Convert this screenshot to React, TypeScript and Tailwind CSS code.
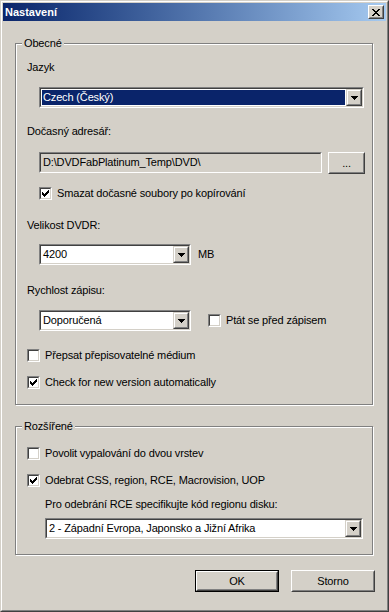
import type { ReactNode } from "react";

const CHECK = [
  "......#",
  ".....##",
  "#...###",
  "##.###.",
  "#####..",
  ".###...",
  "..#....",
];

const CLOSE_X = [
  "##....##",
  ".##..##.",
  "..####..",
  "...##...",
  "..####..",
  ".##..##.",
  "##....##",
];

function Pixels({ rows, color = "#000" }: { rows: string[]; color?: string }) {
  return (
    <svg width={rows[0].length} height={rows.length} shapeRendering="crispEdges" className="block">
      {rows.flatMap((row, y) =>
        row.split("").map((c, x) =>
          c === "#" ? <rect key={`${x}-${y}`} x={x} y={y} width={1} height={1} fill={color} /> : null
        )
      )}
    </svg>
  );
}

function Arrow() {
  return (
    <svg width="7" height="4" shapeRendering="crispEdges" className="block">
      <rect x="0" y="0" width="7" height="1" fill="#000" />
      <rect x="1" y="1" width="5" height="1" fill="#000" />
      <rect x="2" y="2" width="3" height="1" fill="#000" />
      <rect x="3" y="3" width="1" height="1" fill="#000" />
    </svg>
  );
}

// sunken 2px field border (edit / combo box)
function Sunken({ className, inner, children }: { className: string; inner: string; children?: ReactNode }) {
  return (
    <div className={`border border-t-[#808080] border-l-[#808080] border-r-white border-b-white ${className}`}>
      <div className={`h-full border border-t-[#404040] border-l-[#404040] border-r-[#d4d0c8] border-b-[#d4d0c8] ${inner}`}>
        {children}
      </div>
    </div>
  );
}

function Combo({ width, value, selected }: { width: string; value: string; selected?: boolean }) {
  return (
    <Sunken className={`${width} h-[21px]`} inner="flex bg-white">
      <div className="flex-1 min-w-0 p-px">
        <div
          className={`h-full flex items-center pl-[1px] whitespace-nowrap overflow-hidden ${
            selected ? "bg-[#0a246a] text-white" : "text-black"
          }`}
        >
          {value}
        </div>
      </div>
      <div className="w-[16px] h-full border border-t-[#d4d0c8] border-l-[#d4d0c8] border-r-[#404040] border-b-[#404040] bg-[#d4d0c8]">
        <div className="h-full border border-t-white border-l-white border-r-[#808080] border-b-[#808080] flex items-center justify-center">
          <Arrow />
        </div>
      </div>
    </Sunken>
  );
}

function Checkbox({ checked, label }: { checked?: boolean; label: string }) {
  return (
    <div className="flex items-center gap-[5px] h-[13px]">
      <Sunken className="w-[13px] h-[13px] shrink-0" inner="bg-white">
        {checked && (
          <div className="pl-px pt-px">
            <Pixels rows={CHECK} />
          </div>
        )}
      </Sunken>
      <span className="whitespace-nowrap">{label}</span>
    </div>
  );
}

function Button({ children, width, def }: { children: ReactNode; width: string; def?: boolean }) {
  if (def) {
    return (
      <div className={`${width} h-[22px] border border-black`}>
        <div className="h-full border border-t-white border-l-white border-r-[#404040] border-b-[#404040]">
          <div className="h-full border border-t-[#d4d0c8] border-l-[#d4d0c8] border-r-[#808080] border-b-[#808080] flex items-center justify-center">
            {children}
          </div>
        </div>
      </div>
    );
  }
  return (
    <div className={`${width} h-[22px] border border-t-white border-l-white border-r-[#404040] border-b-[#404040]`}>
      <div className="h-full border border-t-[#d4d0c8] border-l-[#d4d0c8] border-r-[#808080] border-b-[#808080] flex items-center justify-center">
        {children}
      </div>
    </div>
  );
}

function Group({ title, className, children }: { title: string; className: string; children: ReactNode }) {
  return (
    <div
      className={`relative ml-[12px] w-[358px] border border-[#808080] shadow-[inset_1px_1px_0_#fff,1px_1px_0_#fff] pl-[11px] ${className}`}
    >
      <span className="absolute -top-[7px] left-[6px] px-[2px] bg-[#d4d0c8]">{title}</span>
      {children}
    </div>
  );
}

export default function App() {
  return (
    <div className="w-[389px] h-[612px] border border-t-[#d4d0c8] border-l-[#d4d0c8] border-r-[#404040] border-b-[#404040] bg-[#d4d0c8] font-['Liberation_Sans',Arial,sans-serif] text-[11px] leading-[13px] tracking-[-0.15px] text-black">
      <div className="h-full border border-t-white border-l-white border-r-[#808080] border-b-[#808080] p-px flex flex-col">
        {/* title bar */}
        <div className="h-[18px] flex items-center bg-linear-to-r from-[#0a246a] to-[#a6caf0] pl-[2px] pr-[2px]">
          <span className="font-bold text-white tracking-normal">Nastavení</span>
          <div className="ml-auto w-[16px] h-[14px] border border-t-white border-l-white border-r-[#404040] border-b-[#404040] bg-[#d4d0c8]">
            <div className="h-full border border-t-[#d4d0c8] border-l-[#d4d0c8] border-r-[#808080] border-b-[#808080] flex items-center justify-center">
              <Pixels rows={CLOSE_X} />
            </div>
          </div>
        </div>

        <Group title="Obecné" className="mt-[22px] h-[362px]">
          <div className="mt-[17px]">Jazyk</div>
          <div className="mt-[13px] ml-[12px]">
            <Combo width="w-[325px]" value="Czech (Český)" selected />
          </div>

          <div className="mt-[17px]">Dočasný adresář:</div>
          <div className="mt-[14px] ml-[12px] flex gap-[6px]">
            <Sunken className="w-[283px] h-[21px]" inner="bg-[#d4d0c8] flex items-center pl-[2px] whitespace-nowrap">
              D:\DVDFabPlatinum_Temp\DVD\
            </Sunken>
            <Button width="w-[37px] h-[21px]">...</Button>
          </div>
          <div className="mt-[13px] ml-[12px]">
            <Checkbox checked label="Smazat dočasné soubory po kopírování" />
          </div>

          <div className="mt-[19px]">Velikost DVDR:</div>
          <div className="mt-[12px] ml-[12px] flex items-center">
            <Combo width="w-[152px]" value="4200" />
            <span className="ml-[7px]">MB</span>
          </div>

          <div className="mt-[19px]">Rychlost zápisu:</div>
          <div className="mt-[13px] ml-[12px] flex items-center">
            <Combo width="w-[152px]" value="Doporučená" />
            <div className="ml-[17px]">
              <Checkbox label="Ptát se před zápisem" />
            </div>
          </div>

          <div className="mt-[18px]">
            <Checkbox label="Přepsat přepisovatelné médium" />
          </div>
          <div className="mt-[14px]">
            <Checkbox checked label="Check for new version automatically" />
          </div>
        </Group>

        <Group title="Rozšířené" className="mt-[21px] h-[129px]">
          <div className="mt-[20px]">
            <Checkbox label="Povolit vypalování do dvou vrstev" />
          </div>
          <div className="mt-[14px]">
            <Checkbox checked label="Odebrat CSS, region, RCE, Macrovision, UOP" />
          </div>
          <div className="mt-[11px] ml-[18px]">Pro odebrání RCE specifikujte kód regionu disku:</div>
          <div className="mt-[7px] ml-[18px]">
            <Combo width="w-[318px]" value="2 - Západní Evropa, Japonsko a Jižní Afrika" />
          </div>
        </Group>

        <div className="mt-[15px] flex justify-end gap-[12px] pr-[11px]">
          <Button width="w-[84px]" def>
            OK
          </Button>
          <Button width="w-[84px]">Storno</Button>
        </div>
      </div>
    </div>
  );
}
